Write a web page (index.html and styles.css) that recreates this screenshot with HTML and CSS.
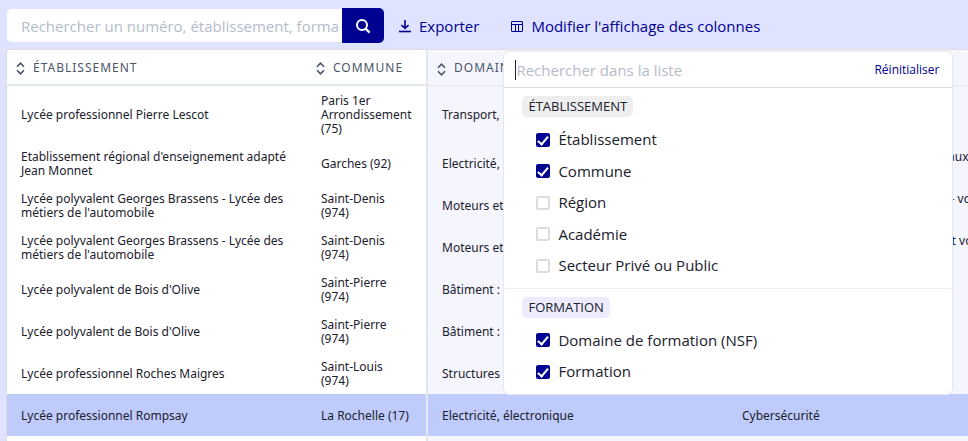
FILE: index.html
```html
<!DOCTYPE html>
<html lang="fr">
<head>
<meta charset="utf-8">
<meta name="viewport" content="width=device-width, initial-scale=1">
<title>Formations</title>
<link rel="stylesheet" href="styles.css">
</head>
<body>
<header class="toolbar">
  <form class="search" role="search">
    <input class="search-input" type="text" aria-label="Rechercher" placeholder="Rechercher un numéro, établissement, formation">
    <button class="search-button" type="button" aria-label="Lancer la recherche">
      <svg width="16" height="16" viewBox="0 0 16 16" fill="none" stroke="currentColor" stroke-width="2"><circle cx="7" cy="7" r="5"/><path d="M10.6 10.6L14.6 14.6" stroke-width="2.2"/></svg>
    </button>
  </form>
  <button class="action" type="button">
    <svg width="12" height="13" viewBox="0 0 12 13" fill="none" stroke="currentColor"><path d="M6 0v8M2.4 5L6 8.4 9.6 5" stroke-width="1.6"/><path d="M0 11.5h12" stroke-width="1.6"/></svg>
    Exporter
  </button>
  <div class="columns-menu">
    <button class="action action-columns" type="button" aria-expanded="true">
      <svg width="12" height="12" viewBox="0 0 12 12" fill="none" stroke="currentColor"><rect x=".5" y=".5" width="11" height="10" rx=".5"/><path d="M1 3.5h10M4.5 4v7M7.5 4v7"/></svg>
      Modifier l'affichage des colonnes
    </button>
    <div class="popover">
      <div class="popover-head">
        <label class="filter"><input class="filter-input" type="text" aria-label="Rechercher dans la liste" placeholder="Rechercher dans la liste"></label>
        <button class="reset" type="button">Réinitialiser</button>
      </div>
      <section class="group">
        <h2 class="badge">ÉTABLISSEMENT</h2>
        <div class="options">
          <label class="option"><input type="checkbox" checked>Établissement</label>
          <label class="option"><input type="checkbox" checked>Commune</label>
          <label class="option"><input type="checkbox">Région</label>
          <label class="option"><input type="checkbox">Académie</label>
          <label class="option"><input type="checkbox">Secteur Privé ou Public</label>
        </div>
      </section>
      <section class="group">
        <h2 class="badge badge-formation">FORMATION</h2>
        <div class="options">
          <label class="option"><input type="checkbox" checked>Domaine de formation (NSF)</label>
          <label class="option"><input type="checkbox" checked>Formation</label>
        </div>
      </section>
    </div>
  </div>
</header>
<main class="table-wrap">
  <table class="table">
    <colgroup><col class="col-wide"><col class="col-town"><col class="col-wide"><col class="col-wide"></colgroup>
    <thead>
      <tr>
        <th class="pinned"><svg class="sort" width="9" height="13" viewBox="0 0 9 13"><path d="M1 4.8L4.5 1.2 8 4.8M1 8.2l3.5 3.6L8 8.2"/></svg>ÉTABLISSEMENT</th>
        <th class="pinned edge"><svg class="sort" width="9" height="13" viewBox="0 0 9 13"><path d="M1 4.8L4.5 1.2 8 4.8M1 8.2l3.5 3.6L8 8.2"/></svg>COMMUNE</th>
        <th><svg class="sort" width="9" height="13" viewBox="0 0 9 13"><path d="M1 4.8L4.5 1.2 8 4.8M1 8.2l3.5 3.6L8 8.2"/></svg>DOMAINE</th>
        <th></th>
      </tr>
    </thead>
    <tbody>
      <tr><td class="pinned">Lycée professionnel Pierre Lescot</td><td class="pinned edge">Paris 1er Arrondissement (75)</td><td>Transport, manutention</td><td>Logistique</td></tr>
      <tr><td class="pinned">Etablissement régional d'enseignement adapté Jean Monnet</td><td class="pinned edge">Garches (92)</td><td>Electricité, électronique</td><td>Maintenance des véhicules des anneaux environnementaux</td></tr>
      <tr><td class="pinned">Lycée polyvalent Georges Brassens - Lycée des métiers de l'automobile</td><td class="pinned edge">Saint-Denis (974)</td><td>Moteurs et mécanique auto</td><td>Maintenance des véhicules option M - voitures particulières</td></tr>
      <tr><td class="pinned">Lycée polyvalent Georges Brassens - Lycée des métiers de l'automobile</td><td class="pinned edge">Saint-Denis (974)</td><td>Moteurs et mécanique auto</td><td>Maintenance des véhicules : transport voitures particulières</td></tr>
      <tr><td class="pinned">Lycée polyvalent de Bois d'Olive</td><td class="pinned edge">Saint-Pierre (974)</td><td>Bâtiment : finitions</td><td>Peinture</td></tr>
      <tr><td class="pinned">Lycée polyvalent de Bois d'Olive</td><td class="pinned edge">Saint-Pierre (974)</td><td>Bâtiment : finitions</td><td>Carrelage</td></tr>
      <tr><td class="pinned">Lycée professionnel Roches Maigres</td><td class="pinned edge">Saint-Louis (974)</td><td>Structures métalliques</td><td>Métallerie</td></tr>
      <tr class="selected"><td class="pinned">Lycée professionnel Rompsay</td><td class="pinned edge">La Rochelle (17)</td><td>Electricité, électronique</td><td>Cybersécurité</td></tr>
      <tr><td class="pinned"></td><td class="pinned edge"></td><td></td><td></td></tr>
    </tbody>
  </table>
</main>
</body>
</html>
```
FILE: styles.css
```css
* { box-sizing: border-box; }

body {
  margin: 0;
  height: 100vh;
  display: flex;
  flex-direction: column;
  overflow: hidden;
  background: #dfe3ff;
  color: #1a202c;
  font-family: "Open Sans", "Noto Sans", sans-serif;
  font-size: 15px;
  line-height: 1.5;
}

button, input { font: inherit; }
button { border: 0; background: none; padding: 0; cursor: pointer; }
svg { flex: none; }

.toolbar { display: flex; align-items: center; padding: 8px 7px 6px; }

.search { display: flex; align-items: center; width: 377px; }
.search-input {
  flex: 1;
  min-width: 0;
  height: 33px;
  padding: 0 4px 0 14px;
  border: 0;
  border-radius: 5px 0 0 5px;
  background: #fff;
}
.search-input::placeholder, .filter-input::placeholder { color: #b4bccb; opacity: 1; }
.search-button {
  display: flex;
  align-items: center;
  justify-content: center;
  width: 42px;
  height: 35px;
  border-radius: 0 5px 5px 0;
  background: #000091;
  color: #fff;
}

.action { display: flex; align-items: center; gap: 8px; margin-left: 15px; padding-top: 2px; color: #000091; white-space: nowrap; }
.columns-menu { position: relative; margin-left: 17px; }

.popover {
  position: absolute;
  top: 38px;
  left: 7px;
  z-index: 2;
  width: 450px;
  border: 1px solid #e2e8f0;
  border-radius: 6px;
  background: #fff;
}
.popover-head {
  display: flex;
  align-items: center;
  justify-content: space-between;
  height: 36px;
  padding: 0 13px 0 11px;
  border-bottom: 1px solid #ddd;
}
.filter { display: flex; align-items: center; flex: 1; }
.filter::before { content: ""; width: 1px; height: 20px; background: #1a202c; }
.filter-input { flex: 1; padding: 0; border: 0; outline: 0; background: none; }
.reset { color: #000091; font-size: 12px; }

.group { padding: 8px 18px 11px; }
.group + .group { border-top: 1px solid #edf2f7; }
.badge {
  width: fit-content;
  margin: 0 0 11px;
  padding: 0 6px;
  border-radius: 5px;
  background: #eee;
  font-size: 13px;
  font-weight: 400;
  line-height: 21px;
}
.badge-formation { background: #ececfe; }
.options { display: flex; flex-direction: column; gap: 9px; padding-left: 14px; }
.option { display: flex; align-items: center; gap: 8px; }
.option input {
  appearance: none;
  display: grid;
  place-content: center;
  width: 14px;
  height: 14px;
  margin: 0;
  border: 2px solid #ddd;
  border-radius: 2px;
}
.option input:checked { border-color: #000091; background: #000091; }
.option input:checked::after {
  content: "";
  width: 4px;
  height: 9px;
  margin-bottom: 1px;
  border: solid #fff;
  border-width: 0 2px 2px 0;
  transform: rotate(40deg);
}

.table-wrap { flex: 1; margin-left: 6px; overflow: hidden; border: solid #ddd; border-width: 1px 0 0 1px; border-radius: 4px 0 0; background: #f5f5fe; }
.table { width: 1021px; table-layout: fixed; border-collapse: separate; border-spacing: 0; font-family: "Noto Sans", sans-serif; font-size: 12px; line-height: 14px; }
.col-wide { width: 300px; }
.col-town { width: 121px; }

th {
  height: 36px;
  padding: 2px 9px 0;
  border-bottom: 1px solid #e2e8f0;
  color: #4a5568;
  font-weight: 400;
  letter-spacing: 1px;
  text-align: left;
  white-space: nowrap;
}
th.pinned { border-bottom-width: 2px; }
.sort { margin-right: 8px; vertical-align: middle; fill: none; stroke: #4a5568; stroke-width: 1.6; }
td { height: 42px; padding: 8px 14px 6px; }
.pinned { background: #fff; }
.edge { border-right: 2px solid #e2e8f0; }
.selected td { background: #bfccfb; }
```
